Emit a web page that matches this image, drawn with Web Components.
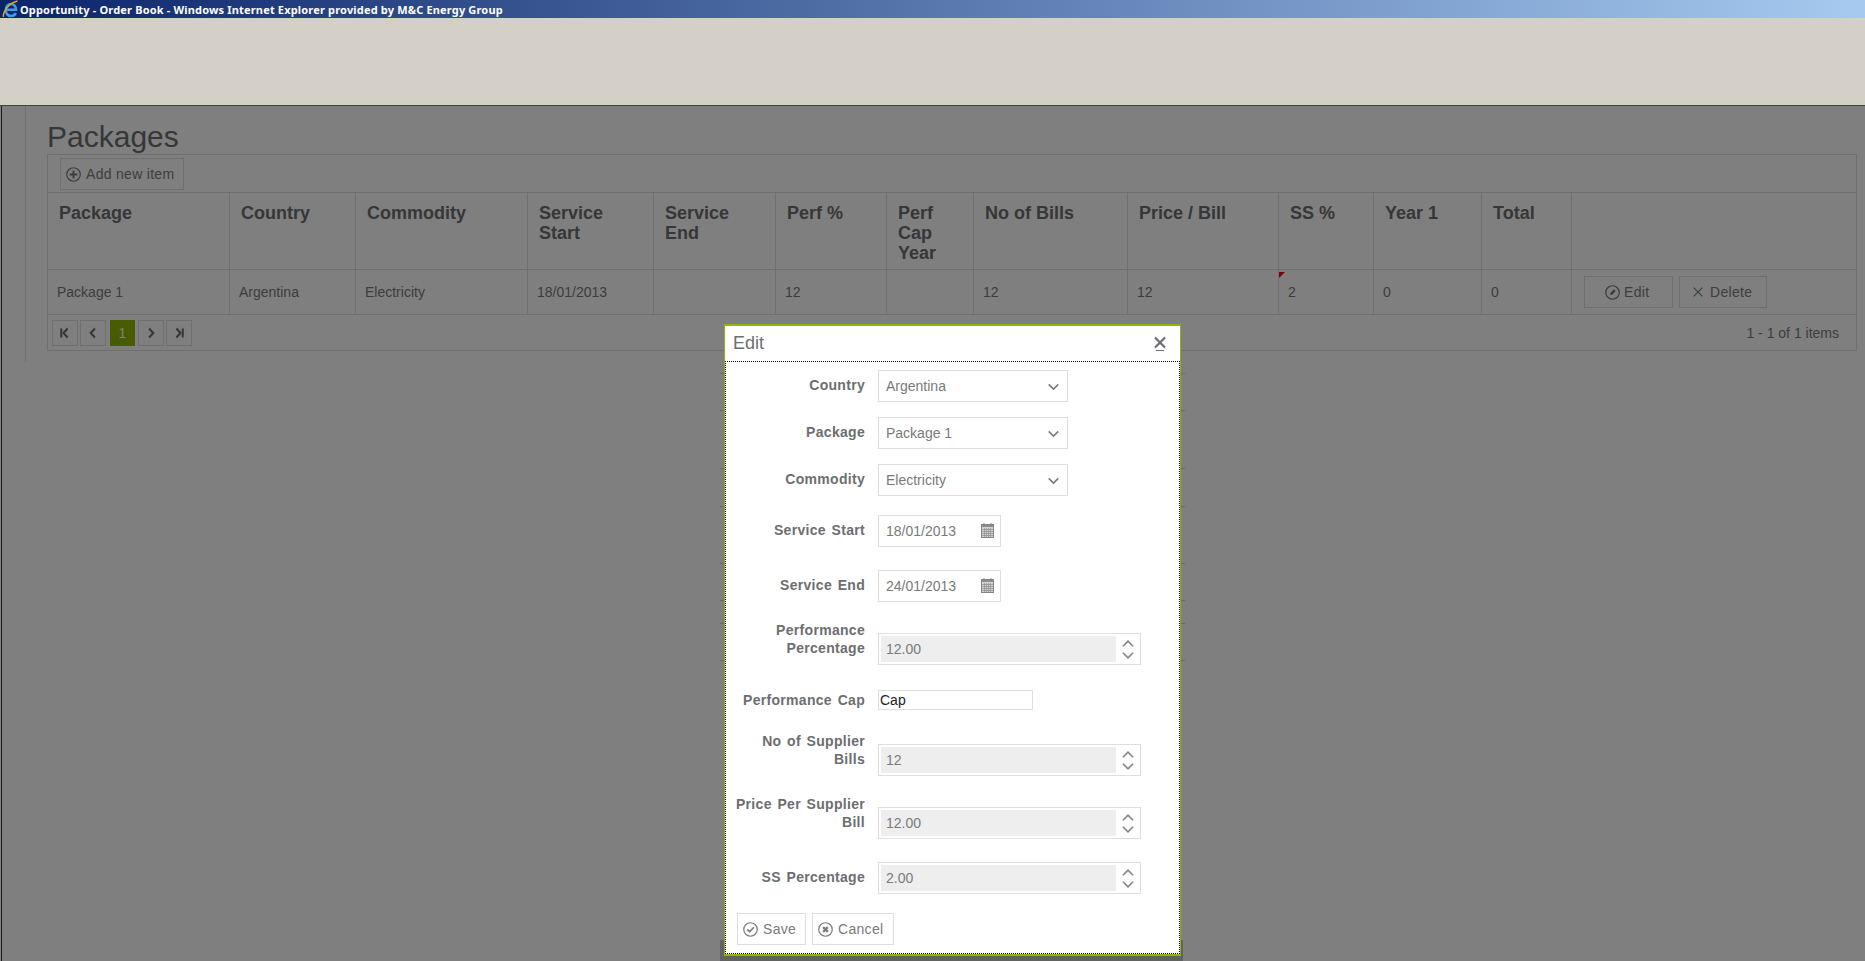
<!DOCTYPE html>
<html>
<head>
<meta charset="utf-8">
<title>Opportunity - Order Book</title>
<style>
  html, body { margin: 0; height: 100%; }
  body {
    position: relative;
    width: 1865px;
    height: 961px;
    overflow: hidden;
    background: #fff;
    font-family: "Liberation Sans", Arial, sans-serif;
    font-size: 14px;
    color: #6d6e71;
  }
</style>
</head>
<body>
<ie-titlebar>Opportunity - Order Book - Windows Internet Explorer provided by M&amp;C Energy Group</ie-titlebar>
<browser-chrome></browser-chrome>
<packages-page heading="Packages"></packages-page>
<modal-overlay></modal-overlay>
<edit-window heading="Edit">
  <form-row label="Country" style="--gap:8px;--label:6px"><form-select>Argentina</form-select></form-row>
  <form-row label="Package" style="--gap:15px;--label:6px"><form-select>Package 1</form-select></form-row>
  <form-row label="Commodity" style="--gap:15px;--label:6px"><form-select>Electricity</form-select></form-row>
  <form-row label="Service Start" style="--gap:19px;--label:6px"><form-date>18/01/2013</form-date></form-row>
  <form-row label="Service End" style="--gap:23px;--label:6px"><form-date>24/01/2013</form-date></form-row>
  <form-row label="Performance|Percentage" style="--gap:19px;--field:12px"><form-number>12.00</form-number></form-row>
  <form-row label="Performance Cap" style="--gap:25px;--label:1px"><form-text>Cap</form-text></form-row>
  <form-row label="No of Supplier|Bills" style="--gap:22px;--field:12px"><form-number>12</form-number></form-row>
  <form-row label="Price Per Supplier|Bill" style="--gap:19px;--field:12px"><form-number>12.00</form-number></form-row>
  <form-row label="SS Percentage" style="--gap:23px;--label:6px"><form-number>2.00</form-number></form-row>
  <form-actions>
    <ui-button icon="check" style="--w:69px;--pad:5px">Save</ui-button>
    <ui-button icon="cancel" style="--w:82px;--pad:5px">Cancel</ui-button>
  </form-actions>
</edit-window>

<script>
const ICONS = {
  plus: '<circle cx="8" cy="8" r="7.200"/><path d="M8 3.800v8.400M3.800 8h8.400" stroke-width="2"/>',
  pencil: '<circle cx="8" cy="8" r="7.200"/><path d="M5.200 11l.9-2.900 3.400-3.500 1.900 1.900-3.400 3.500z" fill="currentColor" stroke="none"/>',
  cross: '<path d="M1 1l14 14M15 1L1 15" stroke-width="1.900"/>',
  check: '<circle cx="8" cy="8" r="7.200"/><path d="M4.500 7.800l2.600 2.600 4.500-4.800" stroke-width="1.800"/>',
  cancel: '<circle cx="8" cy="8" r="7.200"/><path d="M5.500 5.500l5 5M10.500 5.500l-5 5" stroke-width="2.400"/>',
  close: '<path d="M3 1.500l10 10M13 1.500l-10 10" stroke-width="2.200"/><path d="M4 14.500h8" stroke-width="1"/>',
  down: '<path d="M3.500 6l4.500 4.500L12.500 6" stroke-width="1.500"/>',
  up: '<path d="M3.500 10L8 5.500 12.500 10" stroke-width="1.500"/>',
  first: '<path d="M3 2v12" stroke-width="2.800"/><path d="M11.500 2L6 8l5.500 6" stroke-width="2.800"/>',
  prev: '<path d="M10.500 2L5 8l5.500 6" stroke-width="2.800"/>',
  next: '<path d="M5.500 2L11 8l-5.500 6" stroke-width="2.800"/>',
  last: '<path d="M13 2v12" stroke-width="2.800"/><path d="M4.500 2L10 8l-5.500 6" stroke-width="2.800"/>'
};

class UiIcon extends HTMLElement {
  connectedCallback() {
    const size = this.getAttribute("size") || 15;
    const root = this.attachShadow({ mode: "open" });
    root.innerHTML = `
      <style>
        :host { display: inline-flex; flex: none; }
        svg { display: block; fill: none; stroke: currentColor; stroke-width: 1.300; }
      </style>
      <svg width="${size}" height="${size}" viewBox="0 0 16 16">${ICONS[this.getAttribute("name")]}</svg>`;
  }
}

class IeTitlebar extends HTMLElement {
  constructor() {
    super();
    this.attachShadow({ mode: "open" }).innerHTML = `
      <style>
        :host {
          display: flex;
          align-items: center;
          gap: 2px;
          height: 18px;
          padding-left: 2px;
          background: linear-gradient(90deg, #0a246a, #a6caf0);
          color: #fff;
          font: bold 11px "Noto Sans", Tahoma, sans-serif;
          letter-spacing: .17px;
          white-space: nowrap;
        }
        svg { flex: none; }
      </style>
      <svg width="16" height="18" viewBox="0 0 16 18">
        <path d="M4.500 9.800h9.500c0-3.300-2.200-5.800-5-5.800S3.800 6.500 3.800 10.200s2.300 5.800 5.300 5.800c2.300 0 3.800-1 4.700-2.800" fill="none" stroke="#3f9be8" stroke-width="2.600"/>
        <path d="M1.500 17C.5 12 7 3 15.500 1" fill="none" stroke="#e8a317" stroke-width="1.500"/>
      </svg>
      <slot></slot>`;
  }
}

class BrowserChrome extends HTMLElement {
  constructor() {
    super();
    this.attachShadow({ mode: "open" }).innerHTML = `
      <style>
        :host { display: block; height: 87px; background: #d4d0c8; border-bottom: 1px solid #404040; }
      </style>`;
  }
}

class UiButton extends HTMLElement {
  constructor() {
    super();
    this.attachShadow({ mode: "open" }).innerHTML = `
      <style>
        :host {
          display: inline-flex;
          align-items: center;
          gap: var(--gap, 5px);
          box-sizing: border-box;
          width: var(--w, auto);
          height: 32px;
          padding-left: var(--pad, 5px);
          border: 1px solid #dedede;
          color: #7a7a7a;
          font-size: 14px;
          letter-spacing: .3px;
          white-space: nowrap;
        }
      </style>
      <ui-icon name="${this.getAttribute("icon")}" size="${this.getAttribute("icon-size") || 15}"></ui-icon>
      <slot></slot>`;
  }
}

const COLUMNS = [182, 126, 172, 126, 122, 111, 87, 154, 151, 95, 108, 90];
const HEADERS = ["Package", "Country", "Commodity", "Service\nStart", "Service\nEnd", "Perf %",
  "Perf\nCap\nYear", "No of Bills", "Price / Bill", "SS %", "Year 1", "Total", ""];
const ROW = ["Package 1", "Argentina", "Electricity", "18/01/2013", "", "12", "", "12", "12", "2", "0", "0"];

class DataGrid extends HTMLElement {
  constructor() {
    super();
    const heads = HEADERS.map(h => `<div class="th">${h}</div>`).join("");
    const cells = ROW.map((c, i) => `<div class="td${i == 9 ? " dirty" : ""}">${c}</div>`).join("");
    this.attachShadow({ mode: "open" }).innerHTML = `
      <style>
        :host { display: block; border: 1px solid #dedede; }
        .toolbar { height: 38px; box-sizing: border-box; padding: 3px 0 0 12px; border-bottom: 1px solid #dedede; }
        .table {
          display: grid;
          grid-template-columns: ${COLUMNS.map(w => w + "px").join(" ")} 1fr;
          grid-template-rows: 77px 45px;
        }
        .th, .td { box-sizing: border-box; border-right: 1px solid #dedede; border-bottom: 1px solid #dedede; }
        .th:nth-child(13), .td:last-child { border-right: 0; }
        .th {
          padding: 10px 4px 0 11px;
          font-weight: bold;
          font-size: 18px;
          line-height: 20px;
          white-space: pre-line;
        }
        .td { display: flex; align-items: center; padding-left: 9px; color: #7a7a7a; position: relative; }
        .dirty::before {
          content: "";
          position: absolute;
          top: 2px;
          left: 0;
          border-style: solid;
          border-width: 6px 6px 0 0;
          border-color: #ff0000 transparent transparent transparent;
        }
        .actions { gap: 6px; padding-left: 12px; }
        .pager { display: flex; align-items: center; height: 35px; padding-left: 4px; box-sizing: border-box; color: #7a7a7a; }
        .pg {
          display: flex;
          align-items: center;
          justify-content: center;
          box-sizing: border-box;
          width: 26px;
          height: 26px;
          margin-right: 2px;
          border: 1px solid #dedede;
          color: #6d6e71;
        }
        .pg.on { width: 25px; margin: 0 3px 0 2px; background: #8eb800; border-color: #8eb800; color: #fff; }
        .info { margin-left: auto; padding-right: 17px; }
      </style>
      <div class="toolbar"><ui-button icon="plus" style="--w:124px">Add new item</ui-button></div>
      <div class="table">
        ${heads}${cells}
        <div class="td actions">
          <ui-button icon="pencil" style="--w:89px;--pad:20px;--gap:4px">Edit</ui-button>
          <ui-button icon="cross" icon-size="10" style="--w:88px;--pad:13px;--gap:7px">Delete</ui-button>
        </div>
      </div>
      <div class="pager">
        <div class="pg"><ui-icon name="first" size="12"></ui-icon></div>
        <div class="pg"><ui-icon name="prev" size="12"></ui-icon></div>
        <div class="pg on">1</div>
        <div class="pg"><ui-icon name="next" size="12"></ui-icon></div>
        <div class="pg"><ui-icon name="last" size="12"></ui-icon></div>
        <div class="info">1 - 1 of 1 items</div>
      </div>`;
  }
}

class PackagesPage extends HTMLElement {
  constructor() {
    super();
    this.attachShadow({ mode: "open" }).innerHTML = `
      <style>
        :host { display: block; padding-left: 23px; margin-left: 1px; height: 855px; box-sizing: border-box; border-left: 1px solid #3a3a3a; }
        .side { height: 256px; box-sizing: border-box; padding: 14px 8px 0 21px; border-left: 1px solid #dedede; }
        h1 { margin: 1px 0 1px; height: 32px; font-size: 30px; font-weight: normal; line-height: 32px; color: #6d6e71; }
      </style>
      <div class="side">
        <h1>${this.getAttribute("heading")}</h1>
        <data-grid></data-grid>
      </div>`;
  }
}

class ModalOverlay extends HTMLElement {
  constructor() {
    super();
    const ticks = [373, 410, 468, 506, 563, 600, 623, 660];
    const mark = x => ticks.map(y => `<i style="left:${x}px;top:${y - 106}px"></i>`).join("");
    this.attachShadow({ mode: "open" }).innerHTML = `
      <style>
        :host { position: absolute; left: 0; top: 106px; right: 0; bottom: 0; background: rgba(0, 0, 0, .5); }
        i { position: absolute; width: 4px; height: 1px; background: #6a6a6a; }
        .under { position: absolute; left: 720px; top: 834px; width: 463px; height: 21px; background: #626262; }
      </style>
      ${mark(720)}${mark(1181)}
      <div class="under"></div>`;
  }
}

class EditWindow extends HTMLElement {
  constructor() {
    super();
    this.attachShadow({ mode: "open" }).innerHTML = `
      <style>
        :host {
          position: absolute;
          left: 724px;
          top: 324px;
          width: 457px;
          height: 632px;
          box-sizing: border-box;
          border: solid #8eb800;
          border-width: 2px 1px;
          background: #fff;
        }
        .head {
          display: flex;
          align-items: center;
          justify-content: space-between;
          height: 35px;
          padding: 0 12px 0 8px;
          box-sizing: border-box;
          font-size: 18px;
          color: #6d6e71;
        }
        .body { height: 593px; box-sizing: border-box; border: 1px dotted #000; }
      </style>
      <div class="head"><span>${this.getAttribute("heading")}</span><ui-icon name="close" size="16"></ui-icon></div>
      <div class="body"><slot></slot></div>`;
  }
}

class FormRow extends HTMLElement {
  constructor() {
    super();
    const label = this.getAttribute("label").replace("|", "<br>");
    this.attachShadow({ mode: "open" }).innerHTML = `
      <style>
        :host { display: flex; align-items: flex-start; gap: 13px; margin-top: var(--gap, 0); }
        label {
          width: 139px;
          flex: none;
          margin-top: var(--label, 0);
          text-align: right;
          font-weight: bold;
          line-height: 18px;
          letter-spacing: .3px;
          word-spacing: 1.500px;
          white-space: nowrap;
          color: #6d6e71;
        }
        .field { margin-top: var(--field, 0); }
      </style>
      <label>${label}</label>
      <div class="field"><slot></slot></div>`;
  }
}

const FIELD = `
  :host {
    display: flex;
    align-items: center;
    box-sizing: border-box;
    height: 32px;
    border: 1px solid #dedede;
    color: #7a7a7a;
    font-size: 14px;
  }`;

class FormSelect extends HTMLElement {
  constructor() {
    super();
    this.attachShadow({ mode: "open" }).innerHTML = `
      <style>
        ${FIELD}
        :host { width: 190px; padding: 0 5px 0 7px; justify-content: space-between; }
      </style>
      <slot></slot><ui-icon name="down" size="17"></ui-icon>`;
  }
}

class FormDate extends HTMLElement {
  constructor() {
    super();
    this.attachShadow({ mode: "open" }).innerHTML = `
      <style>
        ${FIELD}
        :host { width: 123px; padding: 0 6px 0 7px; justify-content: space-between; }
        svg { flex: none; margin-top: -1px; }
      </style>
      <slot></slot>
      <svg width="13" height="15" viewBox="0 0 13 15">
        <rect x=".5" y="1.500" width="12" height="13" fill="#d4d4d4" stroke="#858585"/>
        <rect x="1" y="2" width="11" height="2" fill="#8c8c8c"/>
        <path d="M3 0v3M10 0v3" stroke="#858585"/>
        <path d="M1 6.500h11M1 8.500h11M1 10.500h11M1 12.500h11M3.500 5v9M5.500 5v9M7.500 5v9M9.500 5v9" stroke="#8c8c8c" stroke-width=".7"/>
      </svg>`;
  }
}

class FormNumber extends HTMLElement {
  constructor() {
    super();
    this.attachShadow({ mode: "open" }).innerHTML = `
      <style>
        ${FIELD}
        :host { width: 263px; padding: 2px 0 2px 2px; }
        .value { flex: 1; align-self: stretch; display: flex; align-items: center; padding-left: 5px; background: #eee; }
        .spin { width: 24px; display: flex; flex-direction: column; align-items: center; color: #858585; }
        .spin ui-icon + ui-icon { margin-top: -7px; }
      </style>
      <div class="value"><slot></slot></div>
      <div class="spin"><ui-icon name="up" size="18"></ui-icon><ui-icon name="down" size="18"></ui-icon></div>`;
  }
}

class FormText extends HTMLElement {
  constructor() {
    super();
    this.attachShadow({ mode: "open" }).innerHTML = `
      <style>
        ${FIELD}
        :host { width: 155px; height: 20px; padding-left: 1px; color: #222; }
      </style>
      <slot></slot>`;
  }
}

class FormActions extends HTMLElement {
  constructor() {
    super();
    this.attachShadow({ mode: "open" }).innerHTML = `
      <style>
        :host { display: flex; gap: 6px; margin-top: 19px; padding-left: 11px; }
      </style>
      <slot></slot>`;
  }
}

customElements.define("ui-icon", UiIcon);
customElements.define("ie-titlebar", IeTitlebar);
customElements.define("browser-chrome", BrowserChrome);
customElements.define("ui-button", UiButton);
customElements.define("data-grid", DataGrid);
customElements.define("packages-page", PackagesPage);
customElements.define("modal-overlay", ModalOverlay);
customElements.define("edit-window", EditWindow);
customElements.define("form-row", FormRow);
customElements.define("form-select", FormSelect);
customElements.define("form-date", FormDate);
customElements.define("form-number", FormNumber);
customElements.define("form-text", FormText);
customElements.define("form-actions", FormActions);
</script>
</body>
</html>
